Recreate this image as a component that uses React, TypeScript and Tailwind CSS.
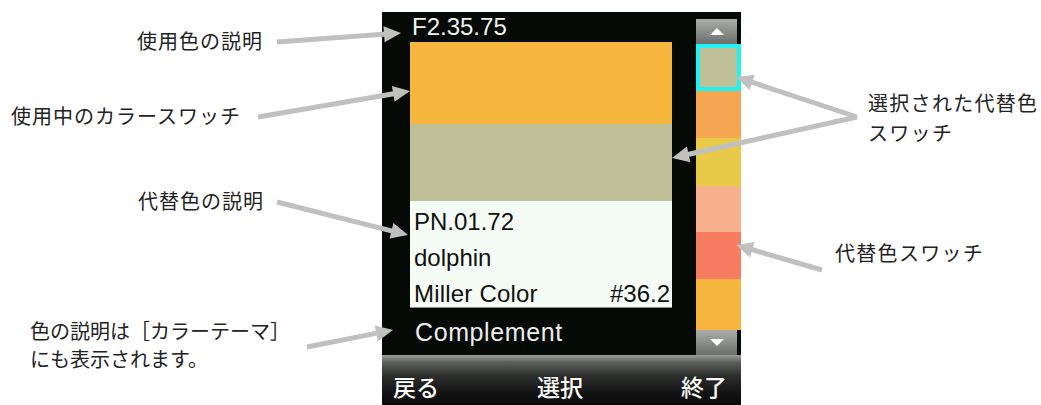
import React from 'react';

const jp = { fontFamily: '"Noto Sans CJK JP", "Noto Sans", sans-serif' };
const dev = { fontFamily: '"Liberation Sans", Arial, sans-serif' };

type Arrow = [number, number, number, number];

const arrows: Arrow[] = [
  [277, 42, 401, 33],
  [258, 117, 410, 91],
  [277, 202, 408, 235],
  [307, 347, 393, 330],
  [857, 117, 736, 77],
  [857, 117, 672, 158],
  [822, 270, 736, 245],
];

function ArrowShape({ a }: { a: Arrow }) {
  const [x1, y1, x2, y2] = a;
  const dx = x2 - x1;
  const dy = y2 - y1;
  const len = Math.hypot(dx, dy);
  const ux = dx / len;
  const uy = dy / len;
  const head = 17;
  const half = 8;
  const bx = x2 - ux * head;
  const by = y2 - uy * head;
  const pts = `${x2},${y2} ${bx - uy * half},${by + ux * half} ${bx + uy * half},${by - ux * half}`;
  return (
    <g>
      <line x1={x1} y1={y1} x2={bx + ux * 2} y2={by + uy * 2} stroke="#c0c0c0" strokeWidth={5} />
      <polygon points={pts} fill="#c0c0c0" />
    </g>
  );
}

const ScrollButton = ({ up }: { up?: boolean }) => (
  <div className="w-[41px] h-[25px] flex items-center justify-center bg-[linear-gradient(to_bottom,#acaeac,#6c6e6c)]">
    <svg width="14" height="7" viewBox="0 0 14 7">
      <polygon points={up ? '7,0 14,7 0,7' : '0,0 14,0 7,7'} fill="#ffffff" />
    </svg>
  </div>
);

const swatches = [
  { color: '#f5a650', h: 'h-[47px]' },
  { color: '#e8ca48', h: 'h-[48px]' },
  { color: '#f8b08c', h: 'h-[46px]' },
  { color: '#f77c60', h: 'h-[47px]' },
  { color: '#f6b63e', h: 'h-[51px]' },
];

export default function App() {
  return (
    <div className="relative w-[1041px] h-[405px] bg-white flex overflow-hidden">
      {/* left callouts */}
      <div className="w-[382px] flex flex-col text-[#222] text-[20px]" style={jp}>
        <div className="ml-[137px] mt-[29px] leading-[24px] tracking-[1px]">使用色の説明</div>
        <div className="ml-[11px] mt-[51px] leading-[24px] tracking-[1px]">使用中のカラースワッチ</div>
        <div className="ml-[138px] mt-[61px] leading-[24px] tracking-[1px]">代替色の説明</div>
        <div className="ml-[30px] mt-[104px] leading-[28px]">
          <div>色の説明は［カラーテーマ］</div>
          <div>にも表示されます。</div>
        </div>
      </div>

      {/* device screen */}
      <div className="mt-[12px] w-[359px] h-[393px] bg-[#050a07] flex flex-col">
        <div className="flex h-[343px]">
          <div className="w-[314px] flex flex-col" style={dev}>
            <div className="h-[30px] pl-[30px] text-[24px] leading-[30px] text-[#f2f2f2]">F2.35.75</div>
            <div className="ml-[28px] w-[262px] h-[82px] bg-[#f6b63e]" />
            <div className="ml-[28px] w-[262px] h-[77px] bg-[#bfbf97]" />
            <div className="ml-[28px] w-[262px] h-[107px] bg-[#f5fbf5] border-b border-[#8a8c8a] pl-[4px] pr-[2px] pt-[3px] text-[24px] leading-[36px] text-[#111]">
              <div>PN.01.72</div>
              <div>dolphin</div>
              <div className="flex justify-between">
                <span className="tracking-[0.2px]">Miller Color</span>
                <span>#36.2</span>
              </div>
            </div>
            <div className="pl-[33px] pt-[9px] text-[25px] leading-[30px] tracking-[0.6px] text-[#eeeeee]">Complement</div>
          </div>
          <div className="w-[45px] pt-[7px] flex flex-col">
            <ScrollButton up />
            <div className="h-[47px] border-[4px] border-[#1ef2f2] bg-[#bfbf97]" />
            {swatches.map((s) => (
              <div key={s.color + s.h} className={`${s.h}`} style={{ backgroundColor: s.color }} />
            ))}
            <ScrollButton />
          </div>
        </div>
        <div
          className="h-[50px] flex justify-between pl-[11px] pr-[14px] pt-[16px] text-[23px] leading-[30px] text-white font-medium bg-[linear-gradient(to_bottom,#9c9e9c_0%,#5e605e_14%,#2c2e2c_42%,#141414_75%,#0a0a0a_100%)]"
          style={{ ...jp, textShadow: '0 0 1px #000, 1px 1px 0 #222' }}
        >
          <span>戻る</span>
          <span>選択</span>
          <span>終了</span>
        </div>
      </div>

      {/* right callouts */}
      <div className="flex-1 flex flex-col text-[#222] text-[20px]" style={jp}>
        <div className="ml-[127px] mt-[88px] leading-[30px] tracking-[1.3px]">
          <div>選択された代替色</div>
          <div>スワッチ</div>
        </div>
        <div className="ml-[94px] mt-[93px] leading-[24px] tracking-[1.3px]">代替色スワッチ</div>
      </div>

      <svg className="absolute inset-0 pointer-events-none" width="1041" height="405">
        {arrows.map((a, i) => (
          <ArrowShape key={i} a={a} />
        ))}
      </svg>
    </div>
  );
}
